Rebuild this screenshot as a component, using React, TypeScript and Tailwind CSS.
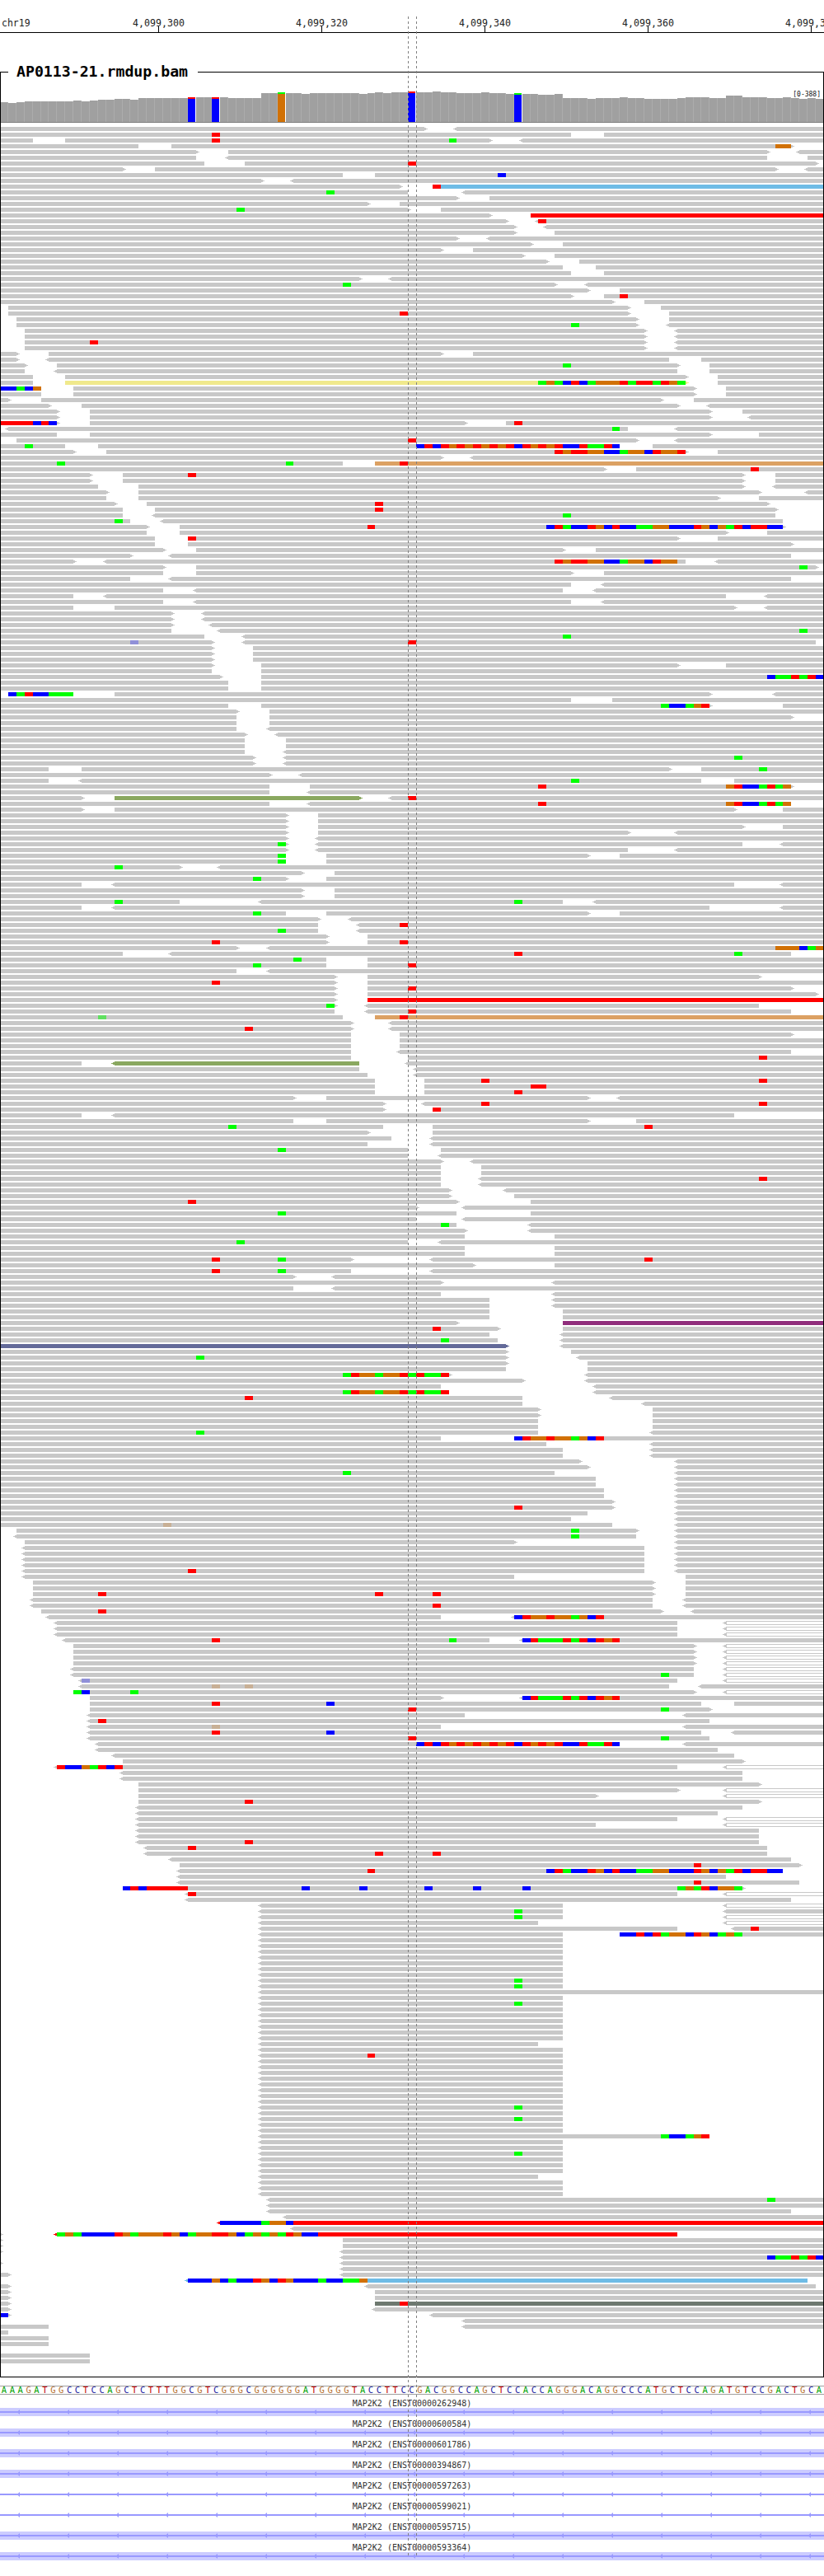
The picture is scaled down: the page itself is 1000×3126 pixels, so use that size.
const MONO = "font-['DejaVu_Sans_Mono',monospace]";
const BP = 9.9;
const ROW_H = 7;
const GRAY = "#c8c8c8";

// One line per pileup row. Positions were read off a 1568px wide view of the
// track (15.52 units per base) and get snapped to bases when drawn.
//   <a-b>=c  read from a to b, optional strand tips, optional fill
//   403r     mismatches starting at 403, one letter per base
const PILEUP = `
-808> <868-
-1087 1149- 403r
-62 124-932> <994- 403r 855g
-263 326-1505> 1475oo
-373> 434-1460> <1520-
-373 <434-1460 1537-
-388 466-1552> 776r
-234> 295-1475> <1535-
-652 713- 947b
-497> <558-
-761> 823-=s 823r
-776 621g <884-
-870> 931-
-700> 760-
-776> 450g 839-
-932> 1010-=R
-963> <1024- 1024r
-978> <1040-
-978> 1055-
-870> <931-
-1009> 1071-
-839> 900-
-994> 1055-
-1040> 1102-
-1071 1133-
-1087 1149-
-684> <745-
-1055> <1118- 652g
-1118> 1179-
-1087> 1149- 1179r
-1165> 1226-
16-1195> 1258-
16-1195> 1273- 760r
31-1211> 1273-
31-1211> <1273- 1087g
47-1226> <1288-
47-1226> <1288-
47-1226> <1288- 171r
47-1226> <1288-
-31> 93-839> 900-
-31> <93-1273 1334-
-47> 108-1288> 1350- 1071g
-47 <108-1288 1350-
-62 124-1304> 1366-
-62 124-1304>=y 1366- 1024gogbrbgooorgrrgrog
-77 0bbgbo 140-1320> 1381-
-77 140-1320> 1381-
-16> 77-1258> 1320-
-93> 155-1288> <1350-
-108> 171-1350> 1413-
-108> 171-1350> <1428-
-108> 0rrrrbrb 171-885> 963- 978r
<15-1195 1165g <1288-
-108 171-1350> 1444-
31-1211> 776r <1288-
-124 47g 187-1180 792brbrororororbrororbbrggrb 1242-
-140> 202-1305> 1055rorroobbgoobroor 1366-
-839> <900-
-652 108g 544g 713-=p 760r
-1149> 1210- 1428r
-171> 234-1413> 1475- 358r
-171> 234-1413> 1475-
-187 263-1413> <1475-
-202> 263-1444> <1537-
-202 263-1366> 1444-
-218> 279-1460> 713r
-234 295-1475> 713r
-234 <295-1475 1071g
-249 218g <310-1490
-279> 342-1490> 699r 1040brgbbrobrbbggoobbbrobogrbrrbb
-279 342-1381> 1460-
-295 358-1288> 358r 1366-
-295 358-1506>
-310> 373-1071> 1133-
-249> <326-1506
-140> <202-1304 1055rorroobbgoobroo <1366-
-310> 373-1552> 1521g
-310 373-1087> 1149-
-249 <326-1506
-1087 <1149-
-310 <373-1071 <1133-
-140 <202-1381 <1460-
-310 <373-1087 <1149-
-140 218-1397> <1460-
-326> <388-
-326> <388-
-326> <404-
-326 <419- 1521g
-388 <466- 1071g
-404> 248l <466-1552 776r
-404> 481-
-404> 481-
-404> 481-
-404> 497-1288> 1381-
-404 497-
-419> 497- 1460bggrgrb
-434 497-
-434 497-
16-140 16bgrbbggg 218-1350> <1475-
-1087 1165-
-434 497-1350> 1258gbbgor 1490-
-450> 513-
-450 513-1506>
-450 513-
-450 <513-
-466> <528-
-466 544-
-466 544-
-466 <544-
-481> <544- 1397g
-481> <544-
-93 155-1273> 1335- 1444g
-513> <575-
-93 <155-1335 1087g 1397-
-513 590-1506> 1024r 1381orbbgrgo
-513 <590-
-155> 218-684>=o <745- 776r
-513 <590-1506 1024r 1381orbbgrgo
-155> 218-1397> 1490-
-544> 605-
-544> 605-
-544> 605-1413> 1490-
-544> 605-1196> <1285-
-544> <605-
-544> 528g <605-1413 <1490-
-544> <605-1195 <1288-
-544 528g 621-1118> 1179-
-544 528g 621-
-342> 218g <419-
-575> 637-
-544> 481g 621-
-155 <218-1397 <1490-
-575> 637-
-575> 637-
-342 218g <497-1071 978g <1133-
-155 <218-1350 <1490-
-544 481g 621-1118> 1179-
-606> <668-
-605 <683- 760r
-605 528g <683-
-621> 699-
-621> 403r 699- 760r
-450> <513- 1475ooobgo
-234 <326-1506 978r 1397g
-621 559g 699-
-621 481g 699- 776r
-450 <513-
-637> 699-1444>
-637> 403r 699-
-637> 699-1506> 776r
-637> 699-1552>
-637> 699-=R
-637> 621g <699-1444
-637 <699-1506 776r
-652 187h 713-=p 760r
-668> <745-
-668> 466r <745-
-668 760-1506>
-668 760-
-668 760-
-668 <760-1506
-668 776- 1444r
-155 <218-684=o <776-
-684 <792-
-699 <792-
-714 808- 916r 1444r
-714 808- 1010rr
-714 808- 978r
-559> 621-1118> <1180-
-730> <808- 916r 1444r
-730> 823- 823r
-155 <218-1397
-559 621-1118> 1210-
-730 434g 823- 1226r
-700> 823-
-745 <823-
-699 <823-
-776 528g 839-
-776 <839-
-839> <900-
-839 916-
-839 916-
-839 <916- 1444r
-839 <916-
-854> <963-
-854> 978-
-870> 358r 1010-
-792> <885-
-870 528g 1010-
-792 <885-
-870 839g <1010-
-885> <1010-
-885 1055-
-776 450g <839-
-885 1055-
-885 1055-
-668> 403r 528g <823- 1226r
-901> 1055-
-668 403r 528g <823-
-559> <637-
-839> <1055-
-559 <637-
-839 <1055-
-932 <1055-
-932 <1055-
-932 1071-
-932 1071-
-870> 1071-=v
-947> 823r 1071-
-932 <1071-
-947 839g <1071-
-963>=n <1071-
-963> 1087-
-963> 373g <1102-
-963> 1118-
-963 1118-
-855> 652groogoorgrggr <1118-
-994> <1118-
-839 <1133-
-855 652groogoorgrggr <1133-
-994 466r <1165-
-994 <1226-
-1025> 1242-
-1025> 1242-
-1025 1242-
-1025 1242-
-1025 373g <1242-
-839 978- 978broor 1055oo 1087gobr
-1040 <1242-
-1071 <1242-
-1071 <1242-
-1102> <1288-
-1118> <1288-
-1055 652g <1288-
-1133 <1288-
-1133 <1288-
-1149 <1288-
-1149 <1288-
-1165> <1288-
-1165> 978r <1288-
-1118 <1288-
-1087 <1288-
-1165 310t <1288-
31-1211> 1087g <1288-
<31-1211 1087g <1288-
47-978> <1288-
<47-1226 <1288-
<47-1226 <1288-
<47-1226 <1288-
<47-1226 <1288-
<47-1226 358r <1288-
<47-978 1304-
62-1242> 1304-
62-1242> 1304-
62-1242> 187r 713r 823r 1304-
<62-1242 <1304-
<62-1242 823r <1304-
77-1258> 187r <1320-
<93-839 <978- 978broor 1055oo 1087gobr
<108-1288 <1381-=h
<108-1288 <1381-=h
<108-1288 <1381-=h
<124-930 403r 855g <994- 994brgggrgrbror
140-1320> <1381-=h
140-1320> <1381-=h
140-1320> <1381-=h
140-1320> <1381-=h
<140-1320 <1381-=h
<140-1320 1258g <1381-=h
<155-1288 155l <1381-=h
<155-1273 403t 466t <1335-
140-1320> 140gb 249g <1381-=h
171-839> <994- 994brgggrgrbror
171-1335 403r 621b 1397-
171-1350> 776r 1258g
<171-885 <1304-
<171-1350 187r
<171-838 403t <1304-
<171-1334 403r 621b <1397-
<171-1350 776r 1258g
<187-1180 792brbrororororbrororbbrggrb <1304-
<187-1366
<218-1397
234-1413>
<108-1288 108rbbogrbr <1381-=h
<233-1413
<233-1413
263-1444>
263-1289> <1381-=h
263-1134> <1381-=h
263-1444> 466r
<263-1413
<263-1366
<263-1288 <1381-=h
<263-1134 <1381-=h
<263-1444
<263-1444
<263-1444 466r
<279-1460 358r
<279-1460 713r 823r
<326-1505
342-1521> 1320r
<342-1490 699r 1040brgbbrobrbbggoobbbrobogrbrrbb
<342-1381
<342-1521 1320r
234-1413> 234brbrrrrr 574b 683b 808b 900b 994b 1289gogrboog
<358-1288 358r <1381-=h
<358-1505
<497-1071 <1381-=h
<497-1071 978g <1381-
<497-1071 978g <1381-=h
<497-1024 <1381-=h
<497-1288 <1397- 1428r
<497-1071 1179- 1179bbrbrgoobrobgog
<497-1071
<497-1071
<497-1071
<497-1071
<497-1071
<497-1071
<497-1071
<497-1071 978g
<497-1071 978g
<497-
<497-1071
<497-1071 978g
<497-1071
<497-1071
<497-1071
<497-1071
<497-1071
<497-1071
<497-1024
<497-1071
<497-1071 699r
<497-1071
<497-1071
<497-1071
<497-1071
<497-1071
<497-1071
<497-1071
<497-1071
<497-1071 978g
<497-1071
<497-1071 978g
<497-1071
<497-1071
<497-1350 1258gbbgor
<497-1071
<497-1071
<497-1071 978g
<497-1071
<497-1071
<497-1071
<497-1024
<497-1071
<497-1071
<497-1071
<513- 1460g
<513-
<513-1505
<544-
<419-=R 419bbbbbgoob
<559-
-0> <108-1289=R 108gogbbbbrogooorobgoorrobgogogrobb
-0> 652-
-0> 652-
-0> <652-
<652- 1460bggrgrb
-0> <652-
<652-
-16> <652-
<358-1537=s 358bbbobgbbrobrobbbgbbggo
-16> <699-1552
-16> 713-
-16> 713-
-16> 713-=d 760r
-16> <713-
-16> 0b <823-
<885-
-93 <885-
-16
-93
-93
.
-171
-171
`.trim().split("\n");

const READ_FILL: Record<string, string> = {
  y: "#f0e98c",
  s: "#6fbce6",
  R: "#ff0000",
  p: "#dca163",
  o: "#8aa860",
  v: "#902d7c",
  n: "#636a99",
  d: "#6e7970",
};

const BASE_FILL: Record<string, string> = {
  r: "#ff0000",
  g: "#00ff00",
  b: "#0000ff",
  o: "#d17105",
  l: "#9090d8",
  t: "#c8b096",
  h: "#60e060",
};

const COVERAGE = [
  24, 23, 24, 25, 25, 25, 25, 25, 25, 26, 25, 26, 27, 27, 28, 28, 27, 29, 29, 29, 29, 29, 29, 30, 30, 30, 30, 30, 29,
  29, 29, 29, 35, 35, 36, 35, 35, 34, 35, 35, 35, 35, 35, 35, 34, 35, 36, 35, 36, 36, 37, 36, 36, 37, 36, 36, 35, 35,
  35, 36, 35, 35, 34, 35, 34, 34, 33, 33, 34, 29, 29, 29, 28, 29, 29, 29, 30, 29, 29, 28, 28, 28, 28, 29, 30, 30, 30,
  29, 29, 32, 32, 30, 30, 30, 29, 29, 30, 29, 28, 29, 28,
];

// variant bars: base index -> [body, cap]
const COVERAGE_VARIANTS: Record<number, [string, string]> = {
  23: ["#0000ff", "#ff0000"],
  26: ["#0000ff", "#ff0000"],
  34: ["#d17105", "#00ff00"],
  50: ["#0000ff", "#ff0000"],
  63: ["#0000ff", "#00ff00"],
};

const SEQUENCE = "AAAGATGGCCTCCAGCTCTTTGGCGTCGGGCGGGGGGATGGGGTACCTTCCGACGGCCAGCTCCACCAGGGACAGGCCCATGCTCCAGATGTCCGACTGCA";

const LETTER_CLASS: Record<string, string> = {
  A: "text-[#00a000]",
  C: "text-[#2020a0]",
  G: "text-[#b87333]",
  T: "text-[#c00000]",
};

const TRANSCRIPTS = [
  { id: "ENST00000262948", band: true },
  { id: "ENST00000600584", band: true },
  { id: "ENST00000601786", band: true },
  { id: "ENST00000394867", band: true },
  { id: "ENST00000597263", band: false },
  { id: "ENST00000599021", band: false },
  { id: "ENST00000595715", band: true },
  { id: "ENST00000593364", band: true },
];

const TICKS = [
  { x: 192.5, label: "4,099,300" },
  { x: 390.5, label: "4,099,320" },
  { x: 588.5, label: "4,099,340" },
  { x: 786.5, label: "4,099,360" },
  { x: 984.5, label: "4,099,380" },
];

const toPx = (base: number) => Math.round(base * BP);
const toBase = (units: string) => Math.round(Number(units) / 15.52);

function Row({ spec, y }: { spec: string; y: number }) {
  const shapes: React.ReactNode[] = [];
  const marks: React.ReactNode[] = [];

  spec.split(" ").forEach((token, t) => {
    const read = token.match(/^(<?)(\d*)-(\d*)(>?)(?:=(\w))?$/);
    if (read) {
      const x1 = read[2] ? toPx(toBase(read[2])) : 0;
      const x2 = read[3] ? toPx(toBase(read[3])) : 1000;
      const fill = READ_FILL[read[5]] ?? GRAY;
      if (read[5] === "h") {
        shapes.push(
          <rect key={t} x={x1 + 0.5} y={y + 0.5} width={x2 - x1} height={4} fill="#ffffff" stroke={GRAY} />,
        );
      } else if (x2 > x1) {
        shapes.push(<rect key={t} x={x1} y={y} width={x2 - x1} height={5} fill={fill} />);
      }
      if (read[1]) {
        shapes.push(<rect key={`${t}a`} x={x1 - 2} y={y + 1} width={2} height={3} fill={fill} />);
        shapes.push(<rect key={`${t}b`} x={x1 - 4} y={y + 2} width={2} height={1} fill={fill} />);
      }
      if (read[4]) {
        shapes.push(<rect key={`${t}c`} x={x2} y={y + 1} width={2} height={3} fill={fill} />);
        shapes.push(<rect key={`${t}d`} x={x2 + 2} y={y + 2} width={2} height={1} fill={fill} />);
      }
      return;
    }
    const run = token.match(/^(\d+)([a-z]+)$/);
    if (run) {
      const start = toBase(run[1]);
      run[2].split("").forEach((letter, i) => {
        const x = toPx(start + i);
        marks.push(
          <rect
            key={`${t}-${i}`}
            x={x}
            y={y}
            width={toPx(start + i + 1) - x}
            height={5}
            fill={BASE_FILL[letter]}
          />,
        );
      });
    }
  });

  return (
    <g>
      {shapes}
      {marks}
    </g>
  );
}

function Ruler() {
  return (
    <svg width={1000} height={40} className={`block ${MONO}`}>
      <text x={2} y={32} fontSize={11.5} fill="#222222">
        chr19
      </text>
      {TICKS.map((tick) => (
        <g key={tick.x}>
          <text x={tick.x} y={32} fontSize={11.6} fill="#222222" textAnchor="middle">
            {tick.label}
          </text>
          <rect x={Math.floor(tick.x)} y={32} width={1} height={7} fill="#000000" />
        </g>
      ))}
      <rect x={0} y={39} width={1000} height={1} fill="#000000" />
    </svg>
  );
}

function CoverageTrack() {
  return (
    <svg width={998} height={61} viewBox="1 88 998 61" className="block">
      {COVERAGE.map((h, i) => {
        const x = toPx(i);
        const w = toPx(i + 1) - x;
        const variant = COVERAGE_VARIANTS[i];
        if (variant) {
          return (
            <g key={i}>
              <rect x={x} y={148 - h} width={w - 1} height={h} fill={variant[0]} />
              <rect x={x} y={148 - h} width={w - 1} height={2} fill={variant[1]} />
            </g>
          );
        }
        return (
          <g key={i}>
            <rect x={x} y={148 - h} width={w} height={h} fill="#acacac" />
            <rect x={x} y={148 - h} width={w - 1} height={h} fill="#a0a0a0" />
          </g>
        );
      })}
      <rect x={0} y={148} width={1000} height={1} fill="#808080" />
    </svg>
  );
}

function SequenceTrack() {
  return (
    <div className={`mt-[10px] flex h-[11px] items-center border-y border-[#a0a0a0] ${MONO}`}>
      {SEQUENCE.split("").map((letter, i) => (
        <span key={i} className={`w-[9.9px] shrink-0 text-center text-[10.5px] leading-none ${LETTER_CLASS[letter]}`}>
          {letter}
        </span>
      ))}
    </div>
  );
}

function Transcript({ id, band }: { id: string; band: boolean }) {
  const arrows = Array.from({ length: 17 }, (_, i) => 22.7 + i * 60);
  return (
    <div className="h-[25px]">
      <div className={`h-[11px] text-center text-[10px] leading-[11px] text-[#333333] ${MONO}`}>
        MAP2K2 ({id})
      </div>
      <svg width={1000} height={10} className="block">
        {band && <rect x={0} y={0} width={1000} height={10} fill="#ccccff" />}
        <rect x={0} y={4} width={1000} height={2} fill="#9999ff" />
        {arrows.map((x) => (
          <polygon key={x} points={`${x - 2},5 ${x + 1.3},2 ${x + 1.3},8`} fill="#9999ff" />
        ))}
      </svg>
    </div>
  );
}

export default function App() {
  return (
    <div className="relative h-[3126px] w-[1000px] overflow-hidden bg-white">
      <Ruler />

      <div className="relative mt-[47px] h-[2798px] border border-black">
        <div className="absolute -top-[11px] left-[9px] h-[20px] w-[230px] bg-white pl-[10px]">
          <span className={`block text-[18.2px] leading-[20px] font-bold text-black ${MONO}`}>
            AP0113-21.rmdup.bam
          </span>
        </div>
        <div className={`absolute top-[21px] right-[3px] text-[8px] leading-[12px] text-[#111111] ${MONO}`}>
          [0-388]
        </div>
        <CoverageTrack />
        <svg
          width={998}
          height={PILEUP.length * ROW_H}
          viewBox={`1 0 998 ${PILEUP.length * ROW_H}`}
          className="mt-[5px] block"
        >
          {PILEUP.map((spec, i) => (
            <Row key={i} spec={spec} y={i * ROW_H} />
          ))}
        </svg>
      </div>

      <SequenceTrack />

      <div className="mt-[5px]">
        {TRANSCRIPTS.map((tx) => (
          <Transcript key={tx.id} id={tx.id} band={tx.band} />
        ))}
      </div>

      {/* center guide lines sit over every track */}
      <svg width={1000} height={3126} className="pointer-events-none absolute top-0 left-0">
        <line x1={495.5} y1={20} x2={495.5} y2={3103} stroke="#808080" strokeDasharray="3 3" />
        <line x1={505.5} y1={20} x2={505.5} y2={3103} stroke="#808080" strokeDasharray="3 3" />
      </svg>
    </div>
  );
}
